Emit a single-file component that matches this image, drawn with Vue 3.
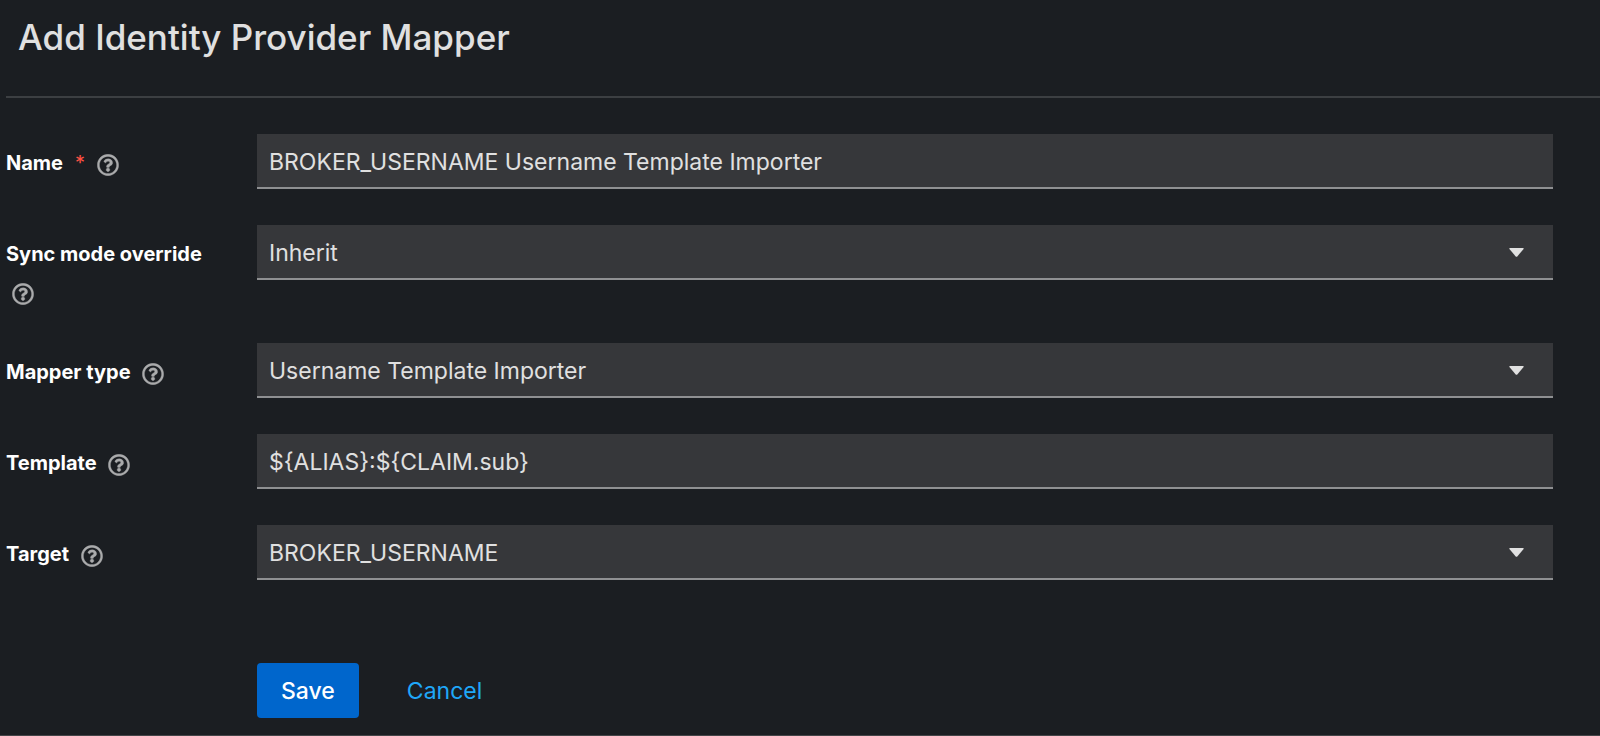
<script setup>
import { ref } from 'vue'

const fields = ref([
  {
    id: 'name',
    label: 'Name',
    required: true,
    type: 'text',
    value: 'BROKER_USERNAME Username Template Importer'
  },
  {
    id: 'sync-mode',
    label: 'Sync mode override',
    type: 'select',
    value: 'Inherit'
  },
  {
    id: 'mapper-type',
    label: 'Mapper type',
    type: 'select',
    value: 'Username Template Importer'
  },
  {
    id: 'template',
    label: 'Template',
    type: 'text',
    value: '${ALIAS}:${CLAIM.sub}'
  },
  {
    id: 'target',
    label: 'Target',
    type: 'select',
    value: 'BROKER_USERNAME'
  }
])
</script>

<template>
  <main class="page">
    <header class="page-header">
      <h1>Add Identity Provider Mapper</h1>
    </header>

    <form class="form" @submit.prevent>
      <div v-for="field in fields" :key="field.id" class="form-group">
        <div class="form-label">
          <label :for="field.id">{{ field.label }}<span v-if="field.required" class="required">*</span></label>
          {{ ' ' }}
          <button type="button" class="help" :aria-label="'Help for ' + field.label">
            <svg viewBox="0 0 512 512" aria-hidden="true">
              <path
                d="M256 8C119.043 8 8 119.083 8 256c0 136.997 111.043 248 248 248s248-111.003 248-248C504 119.083 392.957 8 256 8zm0 448c-110.532 0-200-89.431-200-200 0-110.495 89.472-200 200-200 110.491 0 200 89.471 200 200 0 110.53-89.431 200-200 200zm107.244-255.2c0 67.052-72.421 68.084-72.421 92.863V300c0 6.627-5.373 12-12 12h-45.647c-6.627 0-12-5.373-12-12v-8.659c0-35.745 27.1-50.034 47.579-61.516 17.561-9.845 28.324-16.541 28.324-29.579 0-17.246-21.999-28.693-39.784-28.693-23.189 0-33.894 10.977-48.942 29.969-4.057 5.12-11.46 6.071-16.666 2.124l-27.824-21.098c-5.107-3.872-6.251-11.066-2.644-16.363C184.846 131.491 214.94 112 261.794 112c49.071 0 101.45 38.304 101.45 88.8zM298 368c0 23.159-18.841 42-42 42s-42-18.841-42-42 18.841-42 42-42 42 18.841 42 42z"
              />
            </svg>
          </button>
        </div>

        <div class="form-control">
          <input v-if="field.type === 'text'" :id="field.id" v-model="field.value" type="text" />
          <template v-else>
            <select :id="field.id" v-model="field.value">
              <option :value="field.value">{{ field.value }}</option>
            </select>
            <svg class="caret" viewBox="0 0 15 9" aria-hidden="true">
              <path d="M1 0h13q1 0 .6 1L8.3 8.4q-.8.8-1.6 0L.4 1Q0 0 1 0z" />
            </svg>
          </template>
        </div>
      </div>

      <div class="form-actions">
        <button type="submit" class="save">Save</button>
        <button type="button" class="cancel">Cancel</button>
      </div>
    </form>
  </main>
</template>

<style>
body {
  margin: 0;
  background-color: #1b1e22;
}
</style>

<style scoped>
.page {
  box-sizing: border-box;
  min-height: 100vh;
  padding-left: 6px;
  border-bottom: 1px solid #444548;
  background-color: #1b1e22;
  color: #e0e0e0;
  font-family: Inter, 'Liberation Sans', sans-serif;
}

.page-header {
  padding: 14px 12px 35px;
  border-bottom: 2px solid #3c3f42;
}

h1 {
  margin: 0;
  font-size: 35px;
  font-weight: 500;
  line-height: 47px;
}

.form {
  display: flex;
  flex-direction: column;
  gap: 36px;
  padding: 36px 47px 16px 0;
}

.form-group {
  display: grid;
  grid-template-columns: 251px 1fr;
}

.form-label {
  margin-bottom: -4px;
  padding: 10px 40px 0 0;
  color: #fff;
  font-size: 20px;
  line-height: 38px;
}

label {
  font-weight: 700;
}

.required {
  margin-left: 12px;
  color: #fe5142;
  font-weight: 400;
}

.help {
  padding: 0 6px;
  border: none;
  background: none;
  color: #aaabac;
  line-height: 21px;
  vertical-align: middle;
  cursor: pointer;
}

.help svg {
  display: block;
  width: 22px;
  height: 22px;
  fill: currentColor;
  stroke: currentColor;
  stroke-width: 8;
}

.form-control {
  position: relative;
  align-self: start;
}

input,
select {
  display: block;
  box-sizing: border-box;
  width: 100%;
  height: 55px;
  margin: 0;
  padding: 2px 12px 0;
  border: none;
  border-bottom: 2px solid #8f9092;
  border-radius: 0;
  background-color: #36373a;
  color: #e0e0e0;
  font-family: inherit;
  font-size: 23px;
  appearance: none;
}

.caret {
  position: absolute;
  top: 23px;
  right: 29px;
  width: 15px;
  height: 9px;
  fill: #e0e0e0;
  pointer-events: none;
}

.form-actions {
  display: flex;
  gap: 24px;
  padding: 47px 0 0 251px;
}

.save,
.cancel {
  height: 55px;
  padding: 0 24px;
  border: none;
  border-radius: 4px;
  font-family: inherit;
  font-size: 23px;
  cursor: pointer;
}

.save {
  background-color: #0066cc;
  color: #fff;
  font-weight: 500;
}

.cancel {
  background: none;
  color: #1fa7f8;
}
</style>
